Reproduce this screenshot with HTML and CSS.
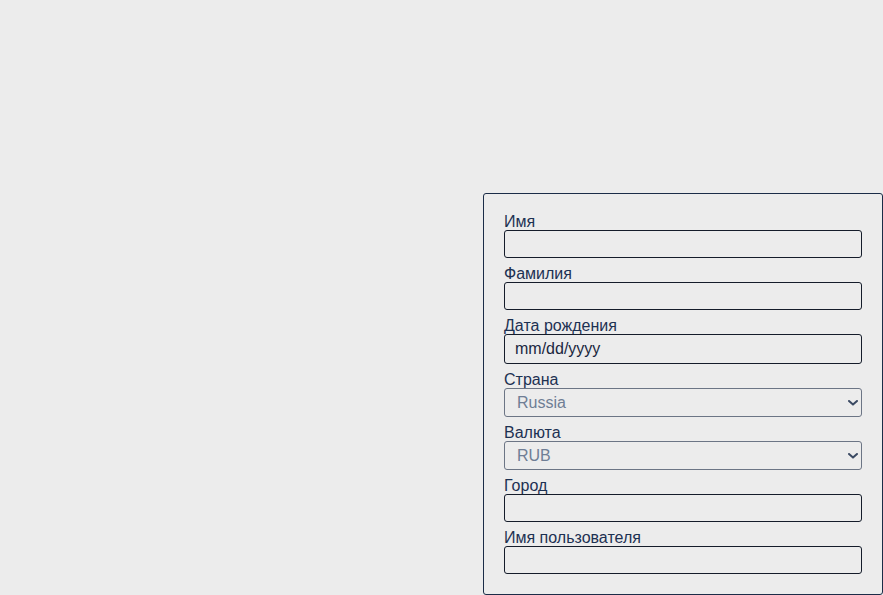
FILE: index.html
```html
<!DOCTYPE html>
<html lang="ru">
<head>
<meta charset="utf-8">
<title>Регистрация</title>
<link rel="stylesheet" href="styles.css">
</head>
<body>
<form class="panel">
  <label class="field-label" for="f-name">Имя</label>
  <input class="field" id="f-name" type="text">
  <label class="field-label" for="f-surname">Фамилия</label>
  <input class="field" id="f-surname" type="text">
  <label class="field-label" for="f-birth">Дата рождения</label>
  <div class="field field-date" id="f-birth">mm/dd/yyyy</div>
  <label class="field-label" for="f-country">Страна</label>
  <select class="field field-select" id="f-country" disabled>
    <option>Russia</option>
  </select>
  <label class="field-label" for="f-currency">Валюта</label>
  <select class="field field-select" id="f-currency" disabled>
    <option>RUB</option>
  </select>
  <label class="field-label" for="f-city">Город</label>
  <input class="field" id="f-city" type="text">
  <label class="field-label" for="f-user">Имя пользователя</label>
  <input class="field" id="f-user" type="text">
</form>
</body>
</html>
```
FILE: styles.css
```css
html, body {
  margin: 0;
  padding: 0;
}
body {
  background: #ececec;
  min-height: 100vh;
  display: flex;
  justify-content: flex-end;
  align-items: flex-end;
  font-family: "Liberation Sans", Arial, sans-serif;
  font-size: 16px;
  color: #1d3152;
}
.panel {
  box-sizing: border-box;
  width: 400px;
  height: 402px;
  border: 1px solid #1b2c47;
  border-radius: 3px;
  padding: 18px 20px 20px;
  display: flex;
  flex-direction: column;
  background: #ececec;
}
.field-label {
  display: block;
  height: 18px;
  line-height: 20px;
  font-size: 16px;
  color: #1d3152;
}
.field {
  box-sizing: border-box;
  display: block;
  width: 100%;
  height: 28px;
  margin: 0 0 6px;
  border: 1px solid #151c2a;
  border-radius: 3px;
  background: #ececec;
  font-family: "Liberation Sans", Arial, sans-serif;
  font-size: 16px;
  color: #1d3152;
  padding: 0 10px;
  outline: none;
}
.field:last-child {
  margin-bottom: 0;
}
.field-date {
  height: 30px;
  line-height: 28px;
  color: #1a2740;
}
.field-select {
  -webkit-appearance: none;
  appearance: none;
  height: 29px;
  padding: 0 12px;
  border-color: #6c7585;
  color: #6f7e95;
  opacity: 1;
  background-color: #ececec;
  background-image: url("data:image/svg+xml,%3Csvg xmlns='http://www.w3.org/2000/svg' width='10' height='6' viewBox='0 0 10 6'%3E%3Cpath d='M1 1l4 3.6L9 1' fill='none' stroke='%233b4a63' stroke-width='2' stroke-linecap='round' stroke-linejoin='round'/%3E%3C/svg%3E");
  background-repeat: no-repeat;
  background-position: right 3px center;
  background-size: 10px 6px;
}
```
